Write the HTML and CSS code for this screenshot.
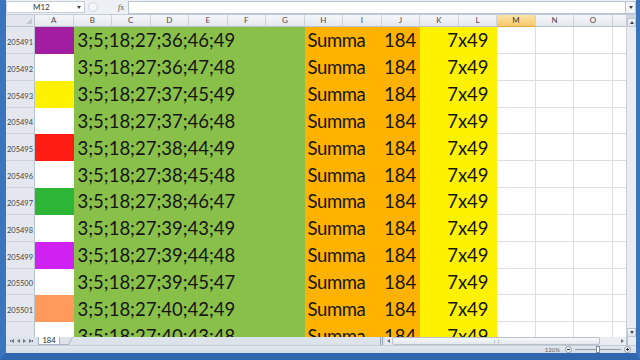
FILE: index.html
```html
<!DOCTYPE html>
<html lang="en">

<head>
    <meta charset="UTF-8">
    <meta name="viewport" content="width=device-width, initial-scale=1.0">
    <title>Lotto 7x49 - Excel</title>
    <link rel="stylesheet" href="styles.css">
</head>

<body>
    <div class="window">
        <!-- formula bar -->
        <div class="formula-bar">
            <div class="name-box">
                <span class="cell-ref">M12</span>
                <span class="tri down"></span>
            </div>
            <div class="fb-grip"></div>
            <div class="fx"><i>f</i><span>x</span></div>
            <div class="formula-input"></div>
            <div class="fb-expand"><span class="tri down"></span></div>
        </div>

        <div class="sheet-area">
            <div class="sheet">
                <div class="corner"></div>
                <div class="col-head">A</div>
                <div class="col-head">B</div>
                <div class="col-head">C</div>
                <div class="col-head">D</div>
                <div class="col-head">E</div>
                <div class="col-head">F</div>
                <div class="col-head">G</div>
                <div class="col-head">H</div>
                <div class="col-head">I</div>
                <div class="col-head">J</div>
                <div class="col-head">K</div>
                <div class="col-head">L</div>
                <div class="col-head active">M</div>
                <div class="col-head">N</div>
                <div class="col-head">O</div>
                <div class="col-head rest"></div>

                <div class="rh">205491</div>
                <div class="mark purple"></div>
                <div class="nums">3;5;18;27;36;46;49</div>
                <div class="summa">Summa</div>
                <div class="sum">184</div>
                <div class="size">7x49</div>
                <div class="cell"></div><div class="cell"></div><div class="cell"></div><div class="cell rest"></div>

                <div class="rh">205492</div>
                <div class="mark"></div>
                <div class="nums">3;5;18;27;36;47;48</div>
                <div class="summa">Summa</div>
                <div class="sum">184</div>
                <div class="size">7x49</div>
                <div class="cell"></div><div class="cell"></div><div class="cell"></div><div class="cell rest"></div>

                <div class="rh">205493</div>
                <div class="mark yellow"></div>
                <div class="nums">3;5;18;27;37;45;49</div>
                <div class="summa">Summa</div>
                <div class="sum">184</div>
                <div class="size">7x49</div>
                <div class="cell"></div><div class="cell"></div><div class="cell"></div><div class="cell rest"></div>

                <div class="rh">205494</div>
                <div class="mark"></div>
                <div class="nums">3;5;18;27;37;46;48</div>
                <div class="summa">Summa</div>
                <div class="sum">184</div>
                <div class="size">7x49</div>
                <div class="cell"></div><div class="cell"></div><div class="cell"></div><div class="cell rest"></div>

                <div class="rh">205495</div>
                <div class="mark red"></div>
                <div class="nums">3;5;18;27;38;44;49</div>
                <div class="summa">Summa</div>
                <div class="sum">184</div>
                <div class="size">7x49</div>
                <div class="cell"></div><div class="cell"></div><div class="cell"></div><div class="cell rest"></div>

                <div class="rh">205496</div>
                <div class="mark"></div>
                <div class="nums">3;5;18;27;38;45;48</div>
                <div class="summa">Summa</div>
                <div class="sum">184</div>
                <div class="size">7x49</div>
                <div class="cell"></div><div class="cell"></div><div class="cell"></div><div class="cell rest"></div>

                <div class="rh">205497</div>
                <div class="mark green"></div>
                <div class="nums">3;5;18;27;38;46;47</div>
                <div class="summa">Summa</div>
                <div class="sum">184</div>
                <div class="size">7x49</div>
                <div class="cell"></div><div class="cell"></div><div class="cell"></div><div class="cell rest"></div>

                <div class="rh">205498</div>
                <div class="mark"></div>
                <div class="nums">3;5;18;27;39;43;49</div>
                <div class="summa">Summa</div>
                <div class="sum">184</div>
                <div class="size">7x49</div>
                <div class="cell"></div><div class="cell"></div><div class="cell"></div><div class="cell rest"></div>

                <div class="rh">205499</div>
                <div class="mark violet"></div>
                <div class="nums">3;5;18;27;39;44;48</div>
                <div class="summa">Summa</div>
                <div class="sum">184</div>
                <div class="size">7x49</div>
                <div class="cell"></div><div class="cell"></div><div class="cell"></div><div class="cell rest"></div>

                <div class="rh">205500</div>
                <div class="mark"></div>
                <div class="nums">3;5;18;27;39;45;47</div>
                <div class="summa">Summa</div>
                <div class="sum">184</div>
                <div class="size">7x49</div>
                <div class="cell"></div><div class="cell"></div><div class="cell"></div><div class="cell rest"></div>

                <div class="rh">205501</div>
                <div class="mark salmon"></div>
                <div class="nums">3;5;18;27;40;42;49</div>
                <div class="summa">Summa</div>
                <div class="sum">184</div>
                <div class="size">7x49</div>
                <div class="cell"></div><div class="cell"></div><div class="cell"></div><div class="cell rest"></div>

                <div class="rh"></div>
                <div class="mark"></div>
                <div class="nums">3;5;18;27;40;43;48</div>
                <div class="summa">Summa</div>
                <div class="sum">184</div>
                <div class="size">7x49</div>
                <div class="cell"></div><div class="cell"></div><div class="cell"></div><div class="cell rest"></div>
            </div>

            <!-- vertical scrollbar -->
            <div class="vscroll">
                <div class="split-box"></div>
                <div class="sb-btn"><span class="tri up"></span></div>
                <div class="sb-track"></div>
                <div class="sb-btn"><span class="tri down"></span></div>
            </div>
        </div>

        <!-- sheet tabs + horizontal scrollbar -->
        <div class="tab-row">
            <div class="tab-nav">
                <span class="tri left bar-l"></span>
                <span class="tri left"></span>
                <span class="tri right"></span>
                <span class="tri right bar-r"></span>
            </div>
            <div class="tab">184</div>
            <div class="new-sheet"></div>
            <div class="tab-space"></div>
            <div class="splitter"></div>
            <div class="hscroll">
                <div class="h-btn"><span class="tri left"></span></div>
                <div class="h-thumb"><span class="grip"></span></div>
                <div class="h-track"></div>
                <div class="h-btn"><span class="tri right"></span></div>
            </div>
            <div class="corner-box"></div>
        </div>

        <!-- status bar -->
        <div class="status-bar">
            <span class="zoom-level">120%</span>
            <span class="zoom-btn minus"></span>
            <div class="zoom-slider"><span class="tick"></span><span class="knob"></span></div>
            <span class="zoom-btn plus"></span>
        </div>
    </div>
</body>

</html>
```

FILE: styles.css
```css
/* excel 2010 window, zoomed to 120% */

*{
    box-sizing: border-box;
}
body{
    margin: 0;
    background: #2d63a8;
    font-family: "Lato", "Liberation Sans", sans-serif;
}
.window{
    width: 640px;
    height: 360px;
    display: flex;
    flex-direction: column;
    border-left: 6px solid #3a74bd;
    border-right: 4px solid #3a74bd;
    border-bottom: 7px solid #2f66ad;
    background: #dfe5ed;
    overflow: hidden;
}

/* small arrow triangles */
.tri{
    display: inline-block;
    width: 0;
    height: 0;
    border-style: solid;
}
.tri.down{
    border-width: 3px 2.5px 0 2.5px;
    border-color: #444 transparent transparent transparent;
}
.tri.up{
    border-width: 0 2.5px 3px 2.5px;
    border-color: transparent transparent #444 transparent;
}
.tri.left{
    border-width: 2px 3px 2px 0;
    border-color: transparent #6a7280 transparent transparent;
}
.tri.right{
    border-width: 2px 0 2px 3px;
    border-color: transparent transparent transparent #6a7280;
}
.tri.bar-l{
    box-shadow: -2px 0 0 -1px #6a7280;
}
.tri.bar-r{
    box-shadow: 2px 0 0 -1px #6a7280;
}

/* formula bar */
.formula-bar{
    height: 15px;
    display: flex;
    align-items: center;
    background: #edf1f6;
    border-bottom: 1px solid #c3cbd6;
    font-size: 8px;
    color: #333;
}
.name-box{
    width: 79px;
    height: 12px;
    display: flex;
    align-items: center;
    background: #fff;
    border: 1px solid #c6ced9;
    padding-left: 26px;
    padding-right: 3px;
}
.cell-ref{
    flex: 1;
}
.fb-grip{
    width: 10px;
    height: 10px;
    margin-left: 3px;
    border-radius: 50%;
    border: 1px solid #cfd6df;
    background: #f4f6f9;
}
.fx{
    margin-left: 20px;
    width: 10px;
    font-family: "Liberation Serif", serif;
    font-size: 8px;
    color: #555;
}
.formula-input{
    flex: 1;
    height: 13px;
    background: #fff;
    border: 1px solid #b9c4d2;
}
.fb-expand{
    width: 10px;
    height: 13px;
    display: flex;
    align-items: center;
    justify-content: center;
    background: #f3f5f8;
    border: 1px solid #b9c4d2;
    border-left: none;
}

/* grid */
.sheet-area{
    height: 322px;
    display: flex;
}
.sheet{
    flex: 1;
    display: grid;
    grid-template-columns: 29px repeat(15, 38.53px) 1fr;
    grid-template-rows: 12px;
    grid-auto-rows: 26.85px;
    overflow: hidden;
    background: #fff;
}
.corner{
    position: relative;
    background: #e3e7ed;
    border-right: 1px solid #b8c3d0;
    border-bottom: 1px solid #b8c3d0;
}
.corner::after{
    content: "";
    position: absolute;
    right: 2px;
    bottom: 2px;
    border-style: solid;
    border-width: 0 0 6px 6px;
    border-color: transparent transparent #c2c9d2 transparent;
}
.col-head{
    background: linear-gradient(#f4f6f9, #e4e8ee);
    border-right: 1px solid #cdd3db;
    border-bottom: 1px solid #b8c3d0;
    font-size: 8px;
    color: #4a4a4a;
    text-align: center;
    line-height: 11px;
}
.col-head.active{
    background: linear-gradient(#fbe4a6, #f5c96c);
    border-bottom-color: #e1a93e;
    color: #3a3a3a;
}
.col-head.rest{
    border-right: none;
}
.rh{
    background: #e4e8ee;
    border-right: 1px solid #b8c3d0;
    border-bottom: 1px solid #cdd3db;
    font-size: 7.5px;
    color: #444;
    display: flex;
    align-items: flex-end;
    justify-content: center;
    padding-bottom: 6px;
}
.mark{
    background: #fff;
}
.mark.purple{ background: #a21ea0; }
.mark.yellow{ background: #fff200; }
.mark.red{ background: #ff1c12; }
.mark.green{ background: #2db536; }
.mark.violet{ background: #cf22f2; }
.mark.salmon{ background: #ff9a5c; }

.nums, .summa, .sum, .size{
    display: flex;
    align-items: center;
    font-size: 18.5px;
    color: #151515;
    white-space: nowrap;
}
.nums{
    grid-column: span 6;
    background: #89c04a;
    padding-left: 4px;
}
.summa{
    grid-column: span 2;
    background: #ffb200;
    padding-left: 3px;
    letter-spacing: -0.4px;
}
.sum{
    background: #ffb200;
    justify-content: flex-end;
    padding-right: 4px;
}
.size{
    grid-column: span 2;
    background: #fff200;
    padding-left: 27px;
}
.cell{
    border-right: 1px solid #dcdee0;
    border-bottom: 1px solid #dcdee0;
}
.cell.rest{
    border-right: none;
}

/* scrollbars */
.vscroll{
    width: 10px;
    display: flex;
    flex-direction: column;
    background: #e9ecf1;
    border-left: 1px solid #c9d0da;
}
.split-box{
    height: 3px;
    background: #cfd6df;
}
.sb-btn{
    height: 9px;
    display: flex;
    align-items: center;
    justify-content: center;
    background: linear-gradient(#f6f8fa, #dde3ea);
    border: 1px solid #bcc6d2;
}
.sb-track{
    flex: 1;
}
.tab-row{
    height: 8px;
    display: flex;
    align-items: stretch;
    background: #dde3ea;
    font-size: 7px;
    color: #444;
}
.tab-nav{
    width: 30px;
    display: flex;
    align-items: center;
    justify-content: space-around;
    padding: 0 3px;
}
.tab{
    width: 22px;
    margin-left: 2px;
    background: #fff;
    border: 1px solid #a9b5c4;
    border-top: none;
    font-size: 7.5px;
    line-height: 7px;
    text-align: center;
    color: #222;
}
.new-sheet{
    width: 9px;
    margin-left: 2px;
    border-bottom: 1px solid #a9b5c4;
    border-right: 1px solid #a9b5c4;
    transform: skewX(-30deg);
}
.tab-space{
    flex: 1;
}
.splitter{
    width: 3px;
    margin-right: 2px;
    border-left: 1px solid #9aa6b5;
    border-right: 1px solid #9aa6b5;
}
.hscroll{
    width: 241px;
    display: flex;
    background: #e9ecf1;
}
.h-btn{
    width: 7px;
    display: flex;
    align-items: center;
    justify-content: center;
}
.h-thumb{
    width: 208px;
    display: flex;
    justify-content: center;
    align-items: center;
    background: linear-gradient(#f7f9fb, #e2e7ee);
    border: 1px solid #b6c1ce;
    border-radius: 2px;
}
.grip{
    width: 5px;
    height: 3px;
    border-left: 1px dotted #9aa6b5;
    border-right: 1px dotted #9aa6b5;
}
.h-track{
    flex: 1;
}
.corner-box{
    width: 10px;
    background: #e9ecf1;
    border-left: 2px solid #b8c3d0;
}

/* status bar */
.status-bar{
    height: 8px;
    display: flex;
    align-items: center;
    justify-content: flex-end;
    padding-right: 5px;
    background: linear-gradient(#e4e8ee, #d5dce5);
    border-top: 1px solid #c3cbd6;
    font-size: 6px;
    color: #666;
}
.zoom-level{
    margin-right: 5px;
}
.zoom-btn{
    position: relative;
    width: 7px;
    height: 7px;
    border-radius: 50%;
    background: #f4f6f9;
    border: 1px solid #8e9aa9;
}
.zoom-btn::before,
.zoom-btn.plus::after{
    content: "";
    position: absolute;
    left: 1px;
    top: 2px;
    width: 3px;
    height: 1px;
    background: #333;
}
.zoom-btn.plus::after{
    left: 2px;
    top: 1px;
    width: 1px;
    height: 3px;
}
.zoom-slider{
    position: relative;
    width: 46px;
    height: 1px;
    margin: 0 3px;
    background: #8e9aa9;
}
.zoom-slider .tick{
    position: absolute;
    left: 22px;
    top: -2px;
    width: 1px;
    height: 5px;
    background: #8e9aa9;
}
.zoom-slider .knob{
    position: absolute;
    left: 21px;
    top: -3px;
    width: 4px;
    height: 7px;
    background: #f7f9fb;
    border: 1px solid #7f8b9a;
}
```
